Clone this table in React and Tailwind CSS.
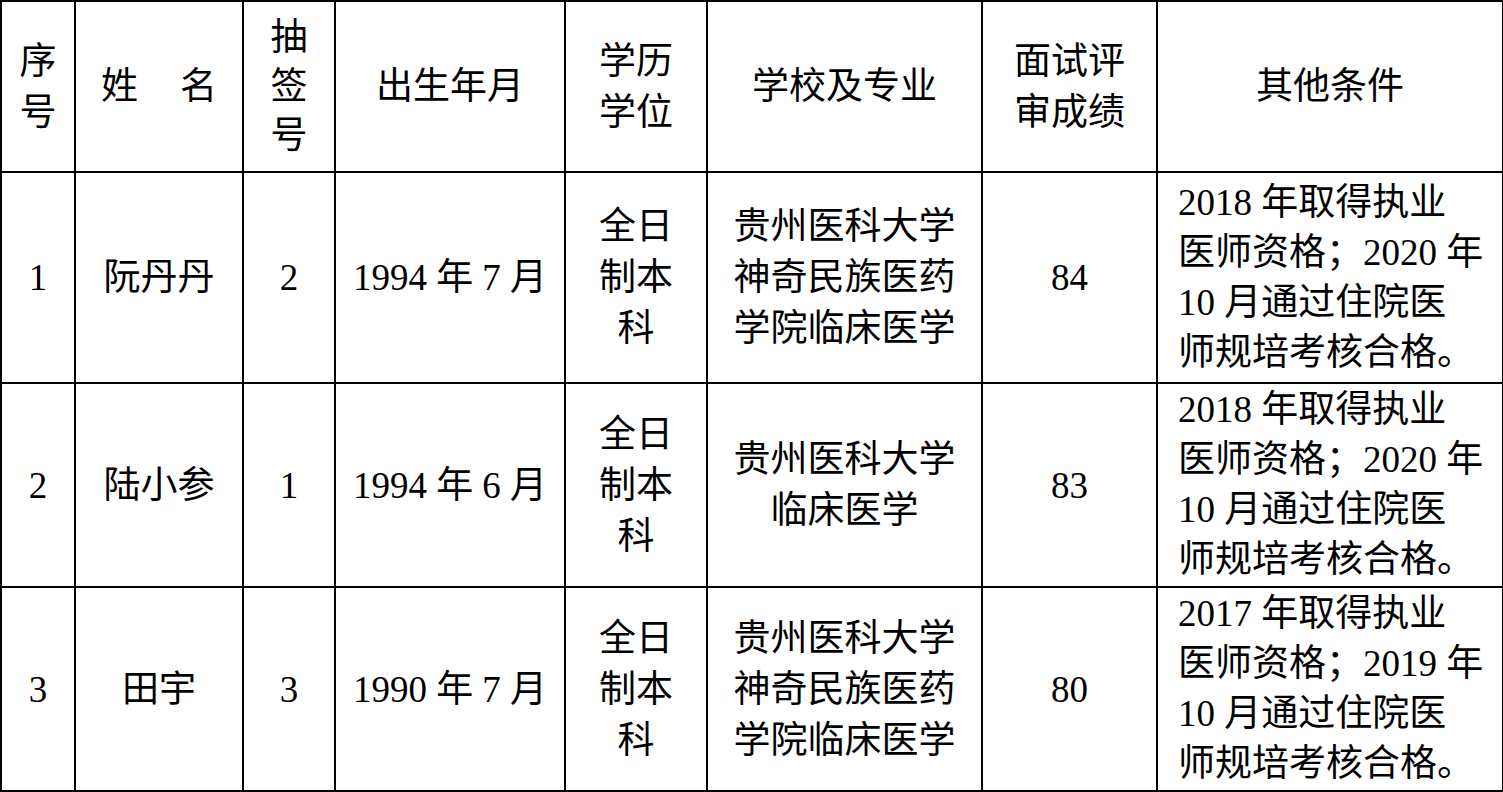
import React from 'react'

const cell = 'border-2 border-black text-center align-middle p-0'

const rows = [
  {
    no: '1',
    name: '阮丹丹',
    lot: '2',
    birth: '1994 年 7 月',
    school: ['贵州医科大学', '神奇民族医药', '学院临床医学'],
    score: '84',
    other: ['2018 年取得执业', '医师资格；2020 年', '10 月通过住院医', '师规培考核合格。'],
    h: 'h-[211px]',
  },
  {
    no: '2',
    name: '陆小参',
    lot: '1',
    birth: '1994 年 6 月',
    school: ['贵州医科大学', '临床医学'],
    score: '83',
    other: ['2018 年取得执业', '医师资格；2020 年', '10 月通过住院医', '师规培考核合格。'],
    h: 'h-[204px]',
  },
  {
    no: '3',
    name: '田宇',
    lot: '3',
    birth: '1990 年 7 月',
    school: ['贵州医科大学', '神奇民族医药', '学院临床医学'],
    score: '80',
    other: ['2017 年取得执业', '医师资格；2019 年', '10 月通过住院医', '师规培考核合格。'],
    h: 'h-[204px]',
  },
]

const Lines = ({ items }) => (
  <div className="flex flex-col items-center">
    {items.map((t, i) => (
      <span key={i} className="whitespace-nowrap">{t}</span>
    ))}
  </div>
)

export default function App() {
  return (
    <div className="min-h-screen bg-white text-black">
      <table
        className="w-[1502px] table-fixed border-collapse text-[37px] leading-[51px] font-normal"
        style={{ fontFamily: '"Liberation Serif", "Noto Sans CJK SC", serif' }}
      >
        <colgroup>
          <col className="w-[74px]" />
          <col className="w-[168px]" />
          <col className="w-[92px]" />
          <col className="w-[230px]" />
          <col className="w-[142px]" />
          <col className="w-[275px]" />
          <col className="w-[175px]" />
          <col className="w-[346px]" />
        </colgroup>
        <thead>
          <tr className="h-[171px]">
            <th className={`${cell} font-normal`}><Lines items={['序', '号']} /></th>
            <th className={`${cell} font-normal`}>姓<span className="inline-block w-[42px]" />名</th>
            <th className={`${cell} font-normal leading-[49px]`}><Lines items={['抽', '签', '号']} /></th>
            <th className={`${cell} font-normal`}>出生年月</th>
            <th className={`${cell} font-normal`}><Lines items={['学历', '学位']} /></th>
            <th className={`${cell} font-normal`}>学校及专业</th>
            <th className={`${cell} font-normal`}><Lines items={['面试评', '审成绩']} /></th>
            <th className={`${cell} font-normal`}>其他条件</th>
          </tr>
        </thead>
        <tbody>
          {rows.map((r) => (
            <tr key={r.no} className={r.h}>
              <td className={cell}>{r.no}</td>
              <td className={cell}>{r.name}</td>
              <td className={cell}>{r.lot}</td>
              <td className={`${cell} whitespace-nowrap`}>{r.birth}</td>
              <td className={cell}><Lines items={['全日', '制本', '科']} /></td>
              <td className={cell}><Lines items={r.school} /></td>
              <td className={cell}>{r.score}</td>
              <td className={`${cell} text-left pl-[20px] leading-[50px]`}>
                {r.other.map((l, i) => (
                  <div key={i} className="whitespace-nowrap">{l}</div>
                ))}
              </td>
            </tr>
          ))}
        </tbody>
      </table>
    </div>
  )
}
